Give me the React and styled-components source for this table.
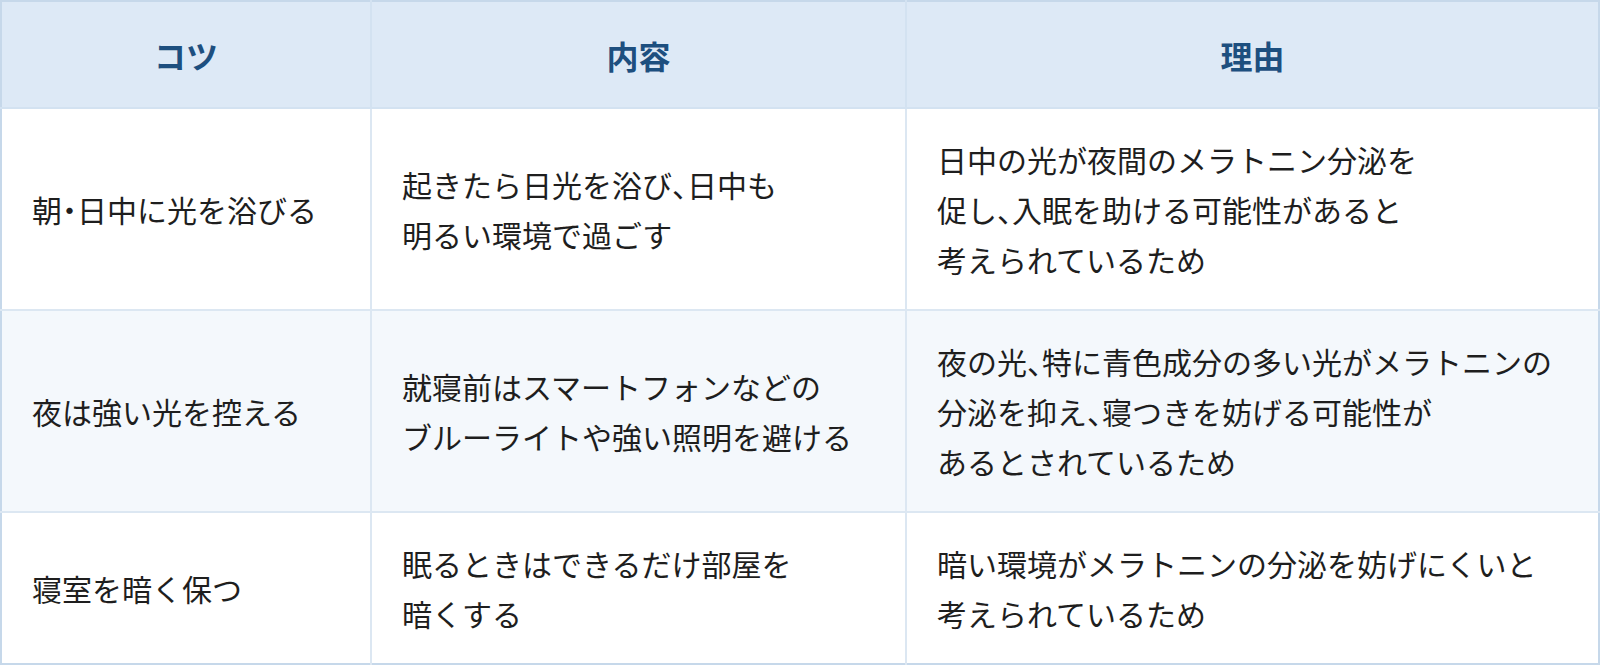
import React from 'react';
import styled, { createGlobalStyle } from 'styled-components';

const GlobalStyle = createGlobalStyle`
    html, body {
        margin: 0;
        padding: 0;
        background: #ffffff;
    }
    body {
        font-family: "Noto Sans CJK JP", "Noto Sans", sans-serif;
    }
`;

const Table = styled.table`
    width: 1600px;
    border-collapse: collapse;
    table-layout: fixed;
    border: 2px solid #c6d8ea;
    color: #1e1e1e;
`;

const HeadCell = styled.th`
    height: 105px;
    padding: 0 30px;
    background: #dde9f6;
    color: #1d4f7f;
    font-size: 32px;
    font-weight: 700;
    text-align: center;
    vertical-align: middle;
    border-right: 2px solid #d3e2f1;
    border-bottom: 2px solid #d3e2f1;
    &:last-child {
        border-right: none;
    }
`;

const Row = styled.tr`
    background: ${props => (props.$alt ? '#f4f8fc' : '#ffffff')};
    border-bottom: 2px solid #dce7f2;
    &:last-child {
        border-bottom: none;
    }
`;

const Cell = styled.td`
    padding: 25px 30px;
    font-size: 30px;
    line-height: 50px;
    vertical-align: middle;
    text-align: left;
    border-right: 2px solid #dce7f2;
    &:last-child {
        border-right: none;
    }
`;

// 句読点は半角幅に詰める
const Punct = styled.span`
    font-feature-settings: "halt";
`;

const rows = [
    {
        tip: ['朝・日中に光を浴びる'],
        detail: ['起きたら日光を浴び、日中も', '明るい環境で過ごす'],
        reason: ['日中の光が夜間のメラトニン分泌を', '促し、入眠を助ける可能性があると', '考えられているため'],
    },
    {
        tip: ['夜は強い光を控える'],
        detail: ['就寝前はスマートフォンなどの', 'ブルーライトや強い照明を避ける'],
        reason: ['夜の光、特に青色成分の多い光がメラトニンの', '分泌を抑え、寝つきを妨げる可能性が', 'あるとされているため'],
    },
    {
        tip: ['寝室を暗く保つ'],
        detail: ['眠るときはできるだけ部屋を', '暗くする'],
        reason: ['暗い環境がメラトニンの分泌を妨げにくいと', '考えられているため'],
    },
];

const Line = ({ text }) =>
    text.split(/([、・])/).map((part, i) =>
        part === '、' || part === '・' ? <Punct key={i}>{part}</Punct> : part,
    );

const Lines = ({ lines }) =>
    lines.map((line, i) => (
        <React.Fragment key={i}>
            {i > 0 && <br />}
            <Line text={line} />
        </React.Fragment>
    ));

export default function App() {
    return (
        <>
            <GlobalStyle />
            <Table>
                <colgroup>
                    <col style={{ width: 370 }} />
                    <col style={{ width: 535 }} />
                    <col />
                </colgroup>
                <thead>
                    <tr>
                        <HeadCell>コツ</HeadCell>
                        <HeadCell>内容</HeadCell>
                        <HeadCell>理由</HeadCell>
                    </tr>
                </thead>
                <tbody>
                    {rows.map((row, i) => (
                        <Row key={i} $alt={i % 2 === 1}>
                            <Cell>
                                <Lines lines={row.tip} />
                            </Cell>
                            <Cell>
                                <Lines lines={row.detail} />
                            </Cell>
                            <Cell>
                                <Lines lines={row.reason} />
                            </Cell>
                        </Row>
                    ))}
                </tbody>
            </Table>
        </>
    );
}
